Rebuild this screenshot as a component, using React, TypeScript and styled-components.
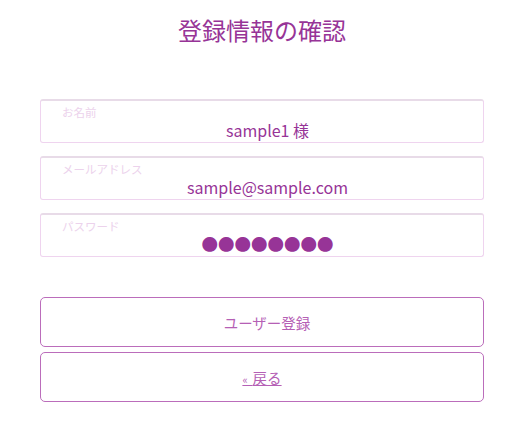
import React from "react";
import styled, { createGlobalStyle } from "styled-components";

const Global = createGlobalStyle`
  html, body { margin: 0; padding: 0; background: #fff; }
  body { font-family: "Noto Sans CJK JP", "Noto Sans", sans-serif; }
`;

const Page = styled.div`
  width: 525px;
  padding: 13px 41px 0 40px;
  box-sizing: border-box;
  display: flex;
  flex-direction: column;
`;

const Title = styled.h1`
  margin: 0;
  font-size: 24px;
  font-weight: 400;
  line-height: 34px;
  text-align: center;
  color: #973497;
`;

const Fields = styled.div`
  margin-top: 52px;
  display: flex;
  flex-direction: column;
  gap: 13px;
`;

const Field = styled.div`
  height: 44px;
  box-sizing: border-box;
  border: 1px solid #efd4ef;
  border-top: 2px solid #e8dbe8;
  border-radius: 3px;
  padding: 3px 10px 0 21px;
  display: flex;
  flex-direction: column;
`;

const Label = styled.div`
  font-size: 11.5px;
  line-height: 16px;
  color: #ecd2ec;
`;

const Value = styled.div<{ $dots?: boolean }>`
  text-align: center;
  font-size: ${(p) => (p.$dots ? "16.5px" : "16px")};
  line-height: 20px;
  margin-top: ${(p) => (p.$dots ? "0" : "0")};
  color: #973497;
`;

const Buttons = styled.div`
  margin-top: 40px;
  display: flex;
  flex-direction: column;
  gap: 5px;
`;

const Button = styled.button<{ $shift?: boolean }>`
  height: 50px;
  width: 100%;
  box-sizing: border-box;
  border: 1px solid #bb6dbb;
  border-radius: 5px;
  background: #fff;
  font-family: "Noto Sans CJK JP", "Noto Sans", sans-serif;
  font-size: 14.5px;
  color: #b560b5;
  padding: ${(p) => (p.$shift ? "0 0 0 10px" : "0")};
  cursor: pointer;
`;

const BackLink = styled.a`
  color: #b560b5;
  text-decoration: underline;
`;

const Chevron = styled.span`
  font-size: 11px;
`;

export default function App() {
  return (
    <>
      <Global />
      <Page>
        <Title>登録情報の確認</Title>
        <Fields>
          <Field>
            <Label>お名前</Label>
            <Value>sample1 様</Value>
          </Field>
          <Field>
            <Label>メールアドレス</Label>
            <Value>sample@sample.com</Value>
          </Field>
          <Field>
            <Label>パスワード</Label>
            <Value $dots>●●●●●●●●</Value>
          </Field>
        </Fields>
        <Buttons>
          <Button $shift>ユーザー登録</Button>
          <Button>
            <BackLink>
              <Chevron>{"«\u00a0\u00a0"}</Chevron>戻る
            </BackLink>
          </Button>
        </Buttons>
      </Page>
    </>
  );
}
